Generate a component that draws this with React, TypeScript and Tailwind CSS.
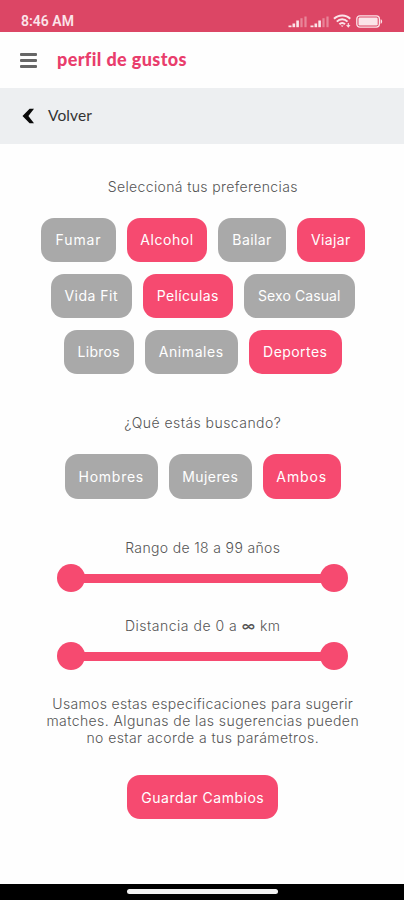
import React, { useState } from "react";

type Option = {
  name: string;
  size: string;
};

const preferenceRows: Option[][] = [
  [
    { name: "Fumar", size: "w-[75px] tracking-[0.9px]" },
    { name: "Alcohol", size: "w-[80px] tracking-[0.55px]" },
    { name: "Bailar", size: "w-[68px] tracking-[0.4px]" },
    { name: "Viajar", size: "w-[67.5px] tracking-[0.35px]" },
  ],
  [
    { name: "Vida Fit", size: "w-[81px] tracking-[0.5px]" },
    { name: "Películas", size: "w-[90px] tracking-[0.35px]" },
    { name: "Sexo Casual", size: "w-[111px] tracking-[0.1px]" },
  ],
  [
    { name: "Libros", size: "w-[70px] tracking-[0.3px]" },
    { name: "Animales", size: "w-[93px] tracking-[0.6px]" },
    { name: "Deportes", size: "w-[93px] tracking-[0.45px]" },
  ],
];

const searchOptions: Option[] = [
  { name: "Hombres", size: "w-[93px] tracking-[0.75px]" },
  { name: "Mujeres", size: "w-[83px] tracking-[0.4px]" },
  { name: "Ambos", size: "w-[78px] tracking-[0.9px]" },
];

function SignalIcon() {
  return (
    <svg width="20" height="12" viewBox="0 0 20 12" fill="#fbe4e9">
      <rect x="0.5" y="9.5" width="3" height="1.7" />
      <rect x="4.5" y="7.5" width="2.6" height="3.7" />
      <rect x="8.3" y="4.5" width="2.6" height="6.7" />
      <rect x="12.4" y="2.2" width="2.2" height="9" opacity="0.4" />
      <rect x="16.4" y="0.5" width="2.2" height="10.7" opacity="0.4" />
    </svg>
  );
}

function StatusBar() {
  return (
    <div className="flex h-8 items-end justify-between bg-[#dc4665] pr-[21px] pb-[3px] pl-[21px]">
      <span className="font-['Roboto',sans-serif] text-[14px] leading-[15px] font-semibold text-[#fbe4e9]">
        8:46 AM
      </span>
      <div className="flex items-end pb-[1px]">
        <SignalIcon />
        <div className="ml-[2px]">
          <SignalIcon />
        </div>
        <svg
          className="ml-[3px]"
          width="19"
          height="14"
          viewBox="0 0 19 14"
          fill="none"
          stroke="#fbe4e9"
          strokeWidth="2"
        >
          <path d="M1 4.8C5.5 0.3 13 0.3 17.2 4.8" />
          <path d="M3.8 7.6C6.8 4.5 11.5 4.5 14.5 7.6" />
          <path d="M6.4 10.2C8 8.5 10.4 8.5 12 10.2" />
          <path d="M7.6 11.6L9.2 13L10.6 11.6Z" fill="#fbe4e9" stroke="none" />
          <path d="M15.3 9V12.5M13.6 11L15.3 13L17 11" strokeWidth="1.1" />
        </svg>
        <svg className="ml-[4px]" width="27" height="13" viewBox="0 0 27 13">
          <rect
            x="0.8"
            y="0.9"
            width="22.6"
            height="11.2"
            rx="3"
            fill="none"
            stroke="#fbe4e9"
            strokeWidth="1.3"
          />
          <rect x="2.5" y="2.6" width="19.2" height="7.8" rx="1.2" fill="#fbe4e9" />
          <path d="M24.6 4.2C26.6 4.6 26.6 8.4 24.6 8.8Z" fill="#fbe4e9" />
        </svg>
      </div>
    </div>
  );
}

type ChipProps = {
  option: Option;
  active: boolean;
  onClick: () => void;
};

function Chip({ option, active, onClick }: ChipProps) {
  return (
    <button
      type="button"
      onClick={onClick}
      className={`h-full rounded-[13px] text-sm whitespace-nowrap text-white ${option.size} ${
        active ? "bg-[#f64a70]" : "bg-[#a9a9a9]"
      }`}
    >
      {option.name}
    </button>
  );
}

function RangeSlider() {
  return (
    <div className="flex h-7 w-[291px] items-center">
      <div className="h-7 w-7 rounded-full bg-[#f64a70]" />
      <div className="-mx-1 h-[9px] flex-1 bg-[#f64a70]" />
      <div className="h-7 w-7 rounded-full bg-[#f64a70]" />
    </div>
  );
}

function App() {
  const [preferences, setPreferences] = useState<string[]>([
    "Alcohol",
    "Viajar",
    "Películas",
    "Deportes",
  ]);
  const [search, setSearch] = useState("Ambos");

  const togglePreference = (name: string) => {
    setPreferences((prev) =>
      prev.includes(name) ? prev.filter((p) => p !== name) : [...prev, name]
    );
  };

  return (
    <div className="flex h-[900px] w-[404px] flex-col overflow-hidden bg-[#fefefe] font-['Inter',sans-serif]">
      <StatusBar />

      <header className="flex h-14 items-center pl-5">
        <button type="button" className="flex w-[17px] flex-col gap-[3px]">
          <span className="h-[3px] w-full rounded-[1px] bg-[#666]" />
          <span className="h-[3px] w-full rounded-[1px] bg-[#666]" />
          <span className="h-[3px] w-full rounded-[1px] bg-[#666]" />
        </button>
        <h1 className="ml-5 pb-[2px] font-['Lato',sans-serif] text-[18px] leading-6 font-black tracking-[0.38px] text-[#e93d6c]">
          perfil de gustos
        </h1>
      </header>

      <div className="flex h-14 items-center bg-[#edeff1] pl-[22px]">
        <svg width="13" height="16" viewBox="0 0 13 16">
          <path d="M7.6 0.8H12L6.4 8L12 15.2H7.6L0.5 8Z" fill="#0a0a0a" />
        </svg>
        <span className="ml-[13px] font-['Lato',sans-serif] text-[15.5px] tracking-[0.1px] text-[#333]">
          Volver
        </span>
      </div>

      <main className="flex flex-1 flex-col items-center pl-[1.5px] text-sm leading-[17px] text-[#555]">
        <p className="mt-[34px] leading-[17px] font-light tracking-[0.37px]">
          Seleccioná tus preferencias
        </p>

        <div className="mt-[23px] flex flex-col items-center gap-3">
          {preferenceRows.map((row, i) => (
            <div key={i} className="flex h-11 gap-[11px]">
              {row.map((option) => (
                <Chip
                  key={option.name}
                  option={option}
                  active={preferences.includes(option.name)}
                  onClick={() => togglePreference(option.name)}
                />
              ))}
            </div>
          ))}
        </div>

        <p className="mt-10 leading-[17px] font-light tracking-[0.45px]">¿Qué estás buscando?</p>

        <div className="mt-[23px] flex h-[45px] gap-[11px]">
          {searchOptions.map((option) => (
            <Chip
              key={option.name}
              option={option}
              active={search === option.name}
              onClick={() => setSearch(option.name)}
            />
          ))}
        </div>

        <p className="mt-10 leading-[17px] font-light tracking-[0.35px]">Rango de 18 a 99 años</p>
        <div className="mt-2">
          <RangeSlider />
        </div>

        <p className="mt-[25px] leading-[17px] font-light tracking-[0.5px]">
          Distancia de 0 a <span className="font-medium">∞</span> km
        </p>
        <div className="mt-2">
          <RangeSlider />
        </div>

        <p className="mt-[25px] text-center leading-[17px] font-light tracking-[0.42px] whitespace-nowrap">
          <span className="tracking-[0.32px]">Usamos estas especificaciones para sugerir</span>
          <br />
          matches. Algunas de las sugerencias pueden
          <br />
          no estar acorde a tus parámetros.
        </p>

        <button
          type="button"
          className="mt-[29px] h-11 w-[151px] rounded-[13px] bg-[#f64a70] tracking-[0.5px] text-white"
        >
          Guardar Cambios
        </button>
      </main>

      <div className="flex h-4 justify-center bg-black pt-[5px]">
        <div className="h-[5px] w-[151px] rounded-full bg-[#f2f2f2]" />
      </div>
    </div>
  );
}

export default App;
